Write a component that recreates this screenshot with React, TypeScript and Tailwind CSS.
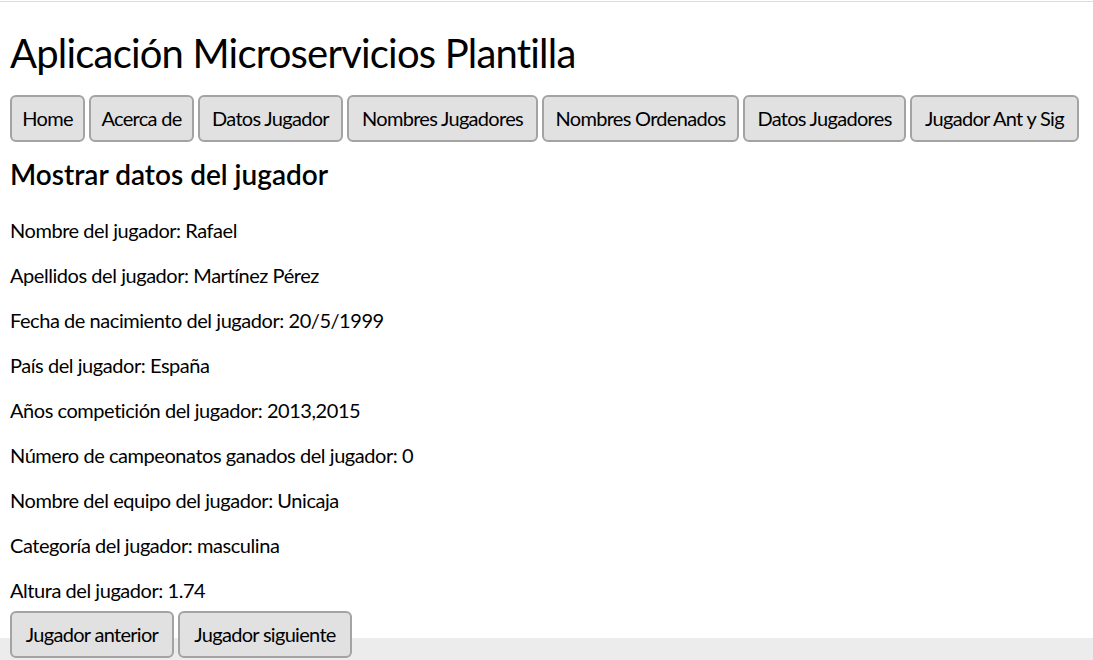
export default function App() {
  const nav = [
    { t: "Home", w: "w-[75px]" },
    { t: "Acerca de", w: "w-[105px]" },
    { t: "Datos Jugador", w: "w-[145px]" },
    { t: "Nombres Jugadores", w: "w-[191px]" },
    { t: "Nombres Ordenados", w: "w-[197px]" },
    { t: "Datos Jugadores", w: "w-[163px]" },
    { t: "Jugador Ant y Sig", w: "w-[169px]" },
  ];
  const rows = [
    "Nombre del jugador: Rafael",
    "Apellidos del jugador: Martínez Pérez",
    "Fecha de nacimiento del jugador: 20/5/1999",
    "País del jugador: España",
    "Años competición del jugador: 2013,2015",
    "Número de campeonatos ganados del jugador: 0",
    "Nombre del equipo del jugador: Unicaja",
    "Categoría del jugador: masculina",
    "Altura del jugador: 1.74",
  ];
  const btn =
    "h-[47px] shrink-0 border-2 border-[#a3a3a3] rounded-[6px] bg-[#e1e1e1] text-[20px] leading-[25px] tracking-[-0.7px] text-black flex items-center justify-center whitespace-nowrap";
  return (
    <div className="w-[1093px] h-[660px] overflow-hidden bg-white flex flex-col" style={{ fontFamily: "Lato, 'Noto Sans', sans-serif" }}>
      <div className="h-px mt-px bg-[#dcdcdc] shrink-0" />
      <div className="flex flex-col pl-[10px] shrink-0">
        <h1 className="mt-[26.5px] text-[40px] leading-[48px] font-normal text-black tracking-[-0.8px]">
          Aplicación Microservicios Plantilla
        </h1>
        <div className="mt-[18.5px] flex gap-[4px]">
          {nav.map((n) => (
            <div key={n.t} className={`${btn} ${n.w}`}>
              {n.t}
            </div>
          ))}
        </div>
        <h2 className="mt-[15px] text-[28px] leading-[34px] font-semibold text-black tracking-[0px]">
          Mostrar datos del jugador
        </h2>
        <div className="mt-[7px] flex flex-col">
          {rows.map((r) => (
            <p key={r} className="mt-[20px] text-[20px] leading-[25px] text-black tracking-[-0.45px]">
              {r}
            </p>
          ))}
        </div>
        <div className="mt-[8px] -mb-[20px] relative z-10 flex gap-[4px]">
          <div className={`${btn} w-[164px]`}>Jugador anterior</div>
          <div className={`${btn} w-[174px]`}>Jugador siguiente</div>
        </div>
      </div>
      <div className="h-[60px] bg-[#ececec] shrink-0" />
    </div>
  );
}
